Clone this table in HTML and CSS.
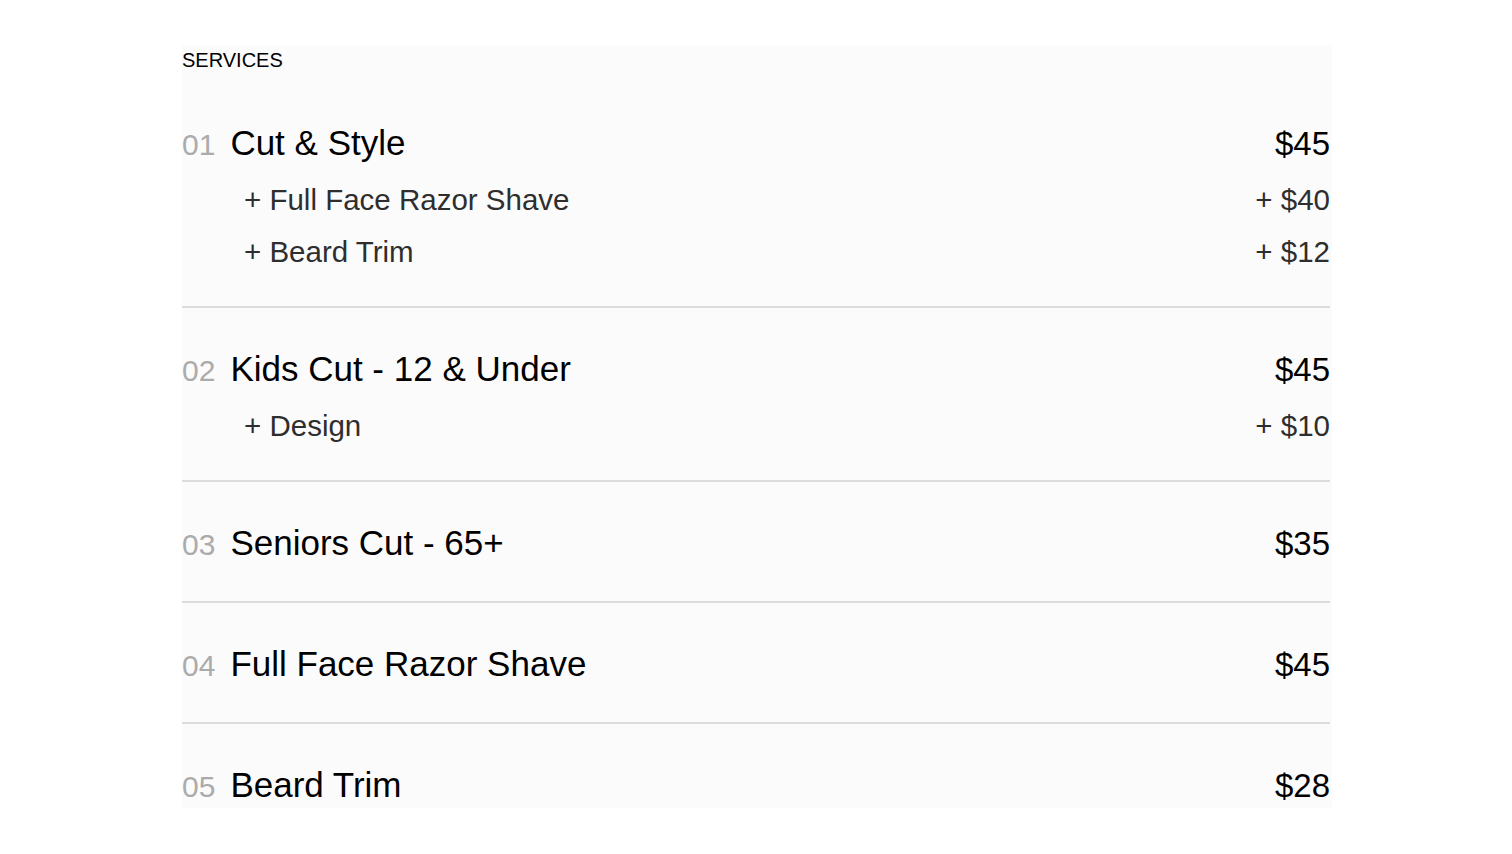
FILE: index.html
```html
<!DOCTYPE html>
<html lang="en">
<head>
<meta charset="utf-8">
<title>Services</title>
<link rel="stylesheet" href="styles.css">
</head>
<body>
<section class="panel">
  <h2 class="heading">SERVICES</h2>
  <ul class="services">
    <li class="service">
      <div class="main">
        <span class="num">01</span>
        <span class="name">Cut &amp; Style</span>
        <span class="price">$45</span>
      </div>
      <ul class="addons">
        <li class="addon"><span>+ Full Face Razor Shave</span><span>+ $40</span></li>
        <li class="addon"><span>+ Beard Trim</span><span>+ $12</span></li>
      </ul>
    </li>
    <li class="service">
      <div class="main">
        <span class="num">02</span>
        <span class="name">Kids Cut - 12 &amp; Under</span>
        <span class="price">$45</span>
      </div>
      <ul class="addons">
        <li class="addon"><span>+ Design</span><span>+ $10</span></li>
      </ul>
    </li>
    <li class="service">
      <div class="main">
        <span class="num">03</span>
        <span class="name">Seniors Cut - 65+</span>
        <span class="price">$35</span>
      </div>
    </li>
    <li class="service">
      <div class="main">
        <span class="num">04</span>
        <span class="name">Full Face Razor Shave</span>
        <span class="price">$45</span>
      </div>
    </li>
    <li class="service">
      <div class="main">
        <span class="num">05</span>
        <span class="name">Beard Trim</span>
        <span class="price">$28</span>
      </div>
    </li>
  </ul>
</section>
</body>
</html>
```

FILE: styles.css
```css
* { box-sizing: border-box; }

html, body {
  margin: 0;
  padding: 0;
  background: #ffffff;
}

body {
  font-family: "Liberation Sans", Arial, Helvetica, sans-serif;
  color: #000;
}

.panel {
  width: 1150px;
  margin: 45px 0 0 182px;
  padding: 3px 2px 0 0;
  background: #fcfbfc;
}

.heading {
  margin: 0 0 10px;
  font-size: 20px;
  line-height: 24px;
  font-weight: 400;
  color: #000;
}

.services {
  list-style: none;
  margin: 0;
  padding: 0;
}

.service {
  padding: 38px 0 35px;
  border-top: 2px solid #dcdcdc;
}

.service:first-child {
  border-top: 0;
}

.service:last-child {
  padding-bottom: 0;
}

.main {
  display: flex;
  align-items: baseline;
  height: 46px;
  line-height: 46px;
}

.num {
  font-size: 30px;
  color: #ababab;
  margin-right: 15px;
}

.name {
  font-size: 35px;
  flex: 1;
}

.price {
  font-size: 33px;
}

.addons {
  list-style: none;
  margin: 15px 0 0;
  padding: 0 0 0 62px;
  display: flex;
  flex-direction: column;
  gap: 14px;
}

.addon {
  display: flex;
  justify-content: space-between;
  font-size: 29.5px;
  line-height: 38px;
  color: #2e2e2e;
}
```
